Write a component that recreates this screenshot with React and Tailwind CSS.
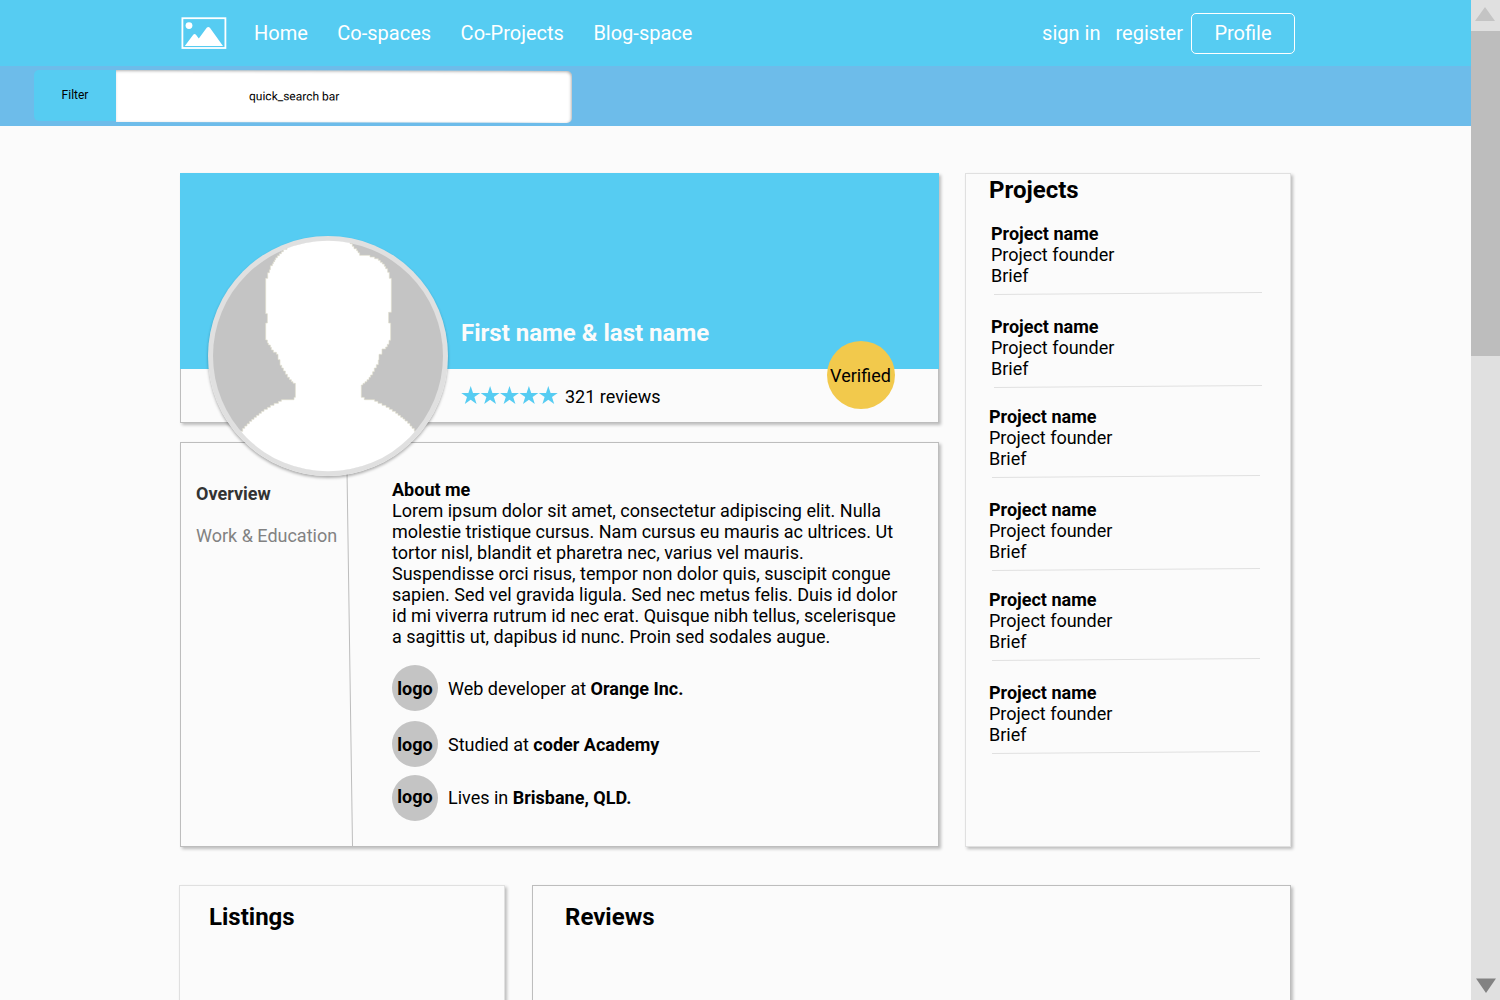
const projects = [
  { pad: 'pl-[25px]', gap: 'mt-[19px]' },
  { pad: 'pl-[25px]', gap: 'mt-[21px]' },
  { pad: 'pl-[23px]', gap: 'mt-[18px]' },
  { pad: 'pl-[23px]', gap: 'mt-[21px]' },
  { pad: 'pl-[23px]', gap: 'mt-[18px]' },
  { pad: 'pl-[23px]', gap: 'mt-[21px]' },
];

const facts = [
  { text: 'Web developer at ', strong: 'Orange Inc.', gap: 'mt-[18px]', logo: 'pt-px', label: 'pb-0' },
  { text: 'Studied at ', strong: 'coder Academy', gap: 'mt-[10px]', logo: 'pt-px', label: 'pb-0' },
  { text: 'Lives in ', strong: 'Brisbane, QLD.', gap: 'mt-[8px]', logo: 'pb-[3px]', label: 'pb-[2px]' },
];

function PictureIcon() {
  return (
    <svg className="h-[33px] w-[46px] shrink-0" viewBox="0 0 46 33" fill="none">
      <rect x="1.4" y="1.2" width="43" height="29.8" stroke="white" strokeWidth="1.8" />
      <circle cx="8" cy="8.6" r="3.4" fill="white" />
      <path d="M3.8 29 12.2 17.8Q13.6 16.2 15 17.8L17.8 21.4 25.7 10.8Q27.3 9 28.9 10.8L42 29Z" fill="white" />
    </svg>
  );
}

function Avatar() {
  return (
    <svg
      className="absolute top-[62px] left-[27px] z-10 h-[240px] w-[240px] overflow-visible rounded-full shadow-[0_2px_3px_rgba(0,0,0,0.3)]"
      viewBox="39 33 720 720"
    >
      <clipPath id="face">
        <circle cx="399" cy="393" r="346" />
      </clipPath>
      <circle cx="399" cy="393" r="360" fill="#e0e0e0" />
      <circle cx="399" cy="393" r="345" fill="#c4c4c4" />
      <path
        clipPath="url(#face)"
        fill="white"
        stroke="#dedccb"
        strokeWidth="2"
        d="M276 44V73H265V80H259V86H253V92H247V98H242V104H239V110H235V116H232V122H226V134H223V143H218V160H212V266H217V294H212V345H217V354H220V360H226V367H229V375H235V382H244V388H249V404H255V421H260V429H265V438H271V448H277V457H283V464H289V470H294V475H301V517H297V524H259V529H250V535H237V541H226V547H217V553H207V559H199V565H192V571H184V577H177V583H170V589H163V596H156V603H149V610H143V619H100V760H700V619H658V610H651V603H645V595H638V588H630V582H624V577H617V571H609V565H602V559H592V553H583V547H573V541H561V535H549V529H539V524H508V517H499V480H504V475H510V470H516V464H522V457H527V450H533V440H538V429H544V419H550V405H552V388H561V372H572V366H577V358H582V346H587V294H581V262H589V160H583V142H578V131H572V124H568V117H562V112H556V106H550V101H539V96H525V91H494V83H489V77H485V71H477V64H472V56H465V44Z"
      />
    </svg>
  );
}

function Stars() {
  return (
    <svg className="h-[20px] w-[97px] shrink-0" viewBox="0 0 97 20" fill="#56ccf2">
      {[0, 1, 2, 3, 4].map((i) => (
        <path
          key={i}
          transform={`translate(${i * 19.4} 0)`}
          d="M9.7 0 12 6.9H19.2L13.4 11.1 15.6 18 9.7 13.8 3.8 18 6 11.1.2 6.9H7.4Z"
        />
      ))}
    </svg>
  );
}

function Header() {
  return (
    <header className="flex h-[66px] items-center bg-[#56ccf2] pl-[181px] pr-[176px] text-[20px] leading-[23px] text-white">
      <PictureIcon />
      <nav className="ml-[27px] flex gap-[29.5px]">
        <a>Home</a>
        <a>Co-spaces</a>
        <a>Co-Projects</a>
        <a>Blog-space</a>
      </nav>
      <div className="ml-auto flex items-center">
        <a className="mr-[15px]">sign in</a>
        <a className="mr-[8px]">register</a>
        <button className="flex h-[41px] w-[104px] items-center justify-center rounded-[5px] border border-white">Profile</button>
      </div>
    </header>
  );
}

function SearchBar() {
  return (
    <div className="flex h-[60px] bg-[#6dbcea] pl-[34px] pt-[4px] text-[12px] leading-[14px] text-black">
      <div className="flex h-[51px] w-[82px] items-center justify-center rounded-l-[5px] bg-[#56ccf2] pb-px">Filter</div>
      <div className="flex h-[51.5px] w-[456px] origin-top-left skew-y-[0.12deg] items-center rounded-r-[5px] bg-white pl-[133px] pt-px shadow-[inset_-1px_1px_3px_rgba(0,0,0,0.3)]">
        quick_search bar
      </div>
    </div>
  );
}

function ProfileCard() {
  return (
    <section className="relative h-[250px] border border-[#bdbdbd] bg-[#fbfbfb] shadow-[2px_2px_3px_rgba(0,0,0,0.25)]">
      <div className="-mx-px -mt-px h-[196px] bg-[#56ccf2] pl-[281px] pt-[146px]">
        <h1 className="text-[24px] leading-[28px] font-bold text-[#fbfbfb]">First name &amp; last name</h1>
      </div>
      <div className="flex items-start pl-[280px] pt-[17px] text-[18px] leading-[21px]">
        <Stars />
        <span className="ml-[7px]">321 reviews</span>
      </div>
      <Avatar />
      <div className="absolute top-[167px] left-[646px] flex size-[68px] items-center justify-center rounded-full bg-[#f2c94c] pr-px text-[18px] leading-[21px]">
        Verified
      </div>
    </section>
  );
}

function OverviewCard() {
  return (
    <section className="mt-[19px] flex h-[405px] border border-[#bdbdbd] bg-[#fbfbfb] text-[18px] leading-[21px] shadow-[2px_2px_3px_rgba(0,0,0,0.25)]">
      <div className="w-[166px] shrink-0 pl-[15px] pt-[40px] whitespace-nowrap">
        <div className="font-bold text-[#333]">Overview</div>
        <div className="mt-[21px] text-[#828282]">Work &amp; Education</div>
      </div>
      <svg className="h-[403px] w-[7px] shrink-0 overflow-visible" viewBox="0 0 7 403">
        <path d="M-.4 0 5.5 403" stroke="#bdbdbd" strokeWidth="1" />
      </svg>
      <div className="pl-[38px] pt-[36px] whitespace-nowrap">
        <h2 className="font-bold">About me</h2>
        <p>
          Lorem ipsum dolor sit amet, consectetur adipiscing elit. Nulla<br />
          molestie tristique cursus. Nam cursus eu mauris ac ultrices. Ut<br />
          tortor nisl, blandit et pharetra nec, varius vel mauris.<br />
          Suspendisse orci risus, tempor non dolor quis, suscipit congue<br />
          sapien. Sed vel gravida ligula. Sed nec metus felis. Duis id dolor<br />
          id mi viverra rutrum id nec erat. Quisque nibh tellus, scelerisque<br />
          a sagittis ut, dapibus id nunc. Proin sed sodales augue.
        </p>
        {facts.map((f) => (
          <div key={f.text} className={`flex items-center ${f.gap}`}>
            <div className={`flex size-[46px] items-center justify-center rounded-full bg-[#c4c4c4] font-bold ${f.logo}`}>logo</div>
            <div className={`ml-[10px] ${f.label}`}>
              {f.text}
              <b>{f.strong}</b>
            </div>
          </div>
        ))}
      </div>
    </section>
  );
}

function ProjectsCard() {
  return (
    <aside className="ml-[26px] h-[674px] w-[326px] border border-[#e0e0e0] bg-[#fbfbfb] text-[18px] leading-[21px] shadow-[2px_2px_3px_rgba(0,0,0,0.25)]">
      <h2 className="pl-[23px] pt-[2px] text-[24px] leading-[28px] font-bold">Projects</h2>
      {projects.map((p, i) => (
        <div key={i} className={`${p.pad} ${p.gap}`}>
          <div className="font-bold">Project name</div>
          <div>Project founder</div>
          <div>Brief</div>
          <svg className="mt-[5px] ml-[3px] h-[4px] w-[268px]" viewBox="0 0 268 4">
            <path d="M0 3.5 268 1.5" stroke="#e0e0e0" strokeWidth="1" />
          </svg>
        </div>
      ))}
    </aside>
  );
}

function Scrollbar() {
  return (
    <div className="flex h-[1000px] w-[29px] flex-col bg-[#e0e0e0]">
      <div className="h-[31px]">
        <svg className="h-[31px] w-[29px]" viewBox="0 0 29 31">
          <path d="M14 7 24 21H4Z" fill="#c4c4c4" />
        </svg>
      </div>
      <div className="h-[325px] bg-[#bdbdbd]" />
      <svg className="mt-auto h-[24px] w-[29px]" viewBox="0 0 29 24">
        <path d="M5 2.5H25L15 17Z" fill="#828282" />
      </svg>
    </div>
  );
}

export default function App() {
  return (
    <div className="flex h-[1000px] w-[1500px] overflow-hidden bg-[#fbfbfb] font-['Roboto',sans-serif] text-black">
      <div className="h-[1000px] w-[1471px] overflow-hidden">
        <Header />
        <SearchBar />
        <main className="pt-[47px] pl-[180px]">
          <div className="flex">
            <div className="w-[759px]">
              <ProfileCard />
              <OverviewCard />
            </div>
            <ProjectsCard />
          </div>
          <div className="-ml-px mt-[38px] flex gap-[27px] text-[24px] leading-[28px] font-bold">
            <section className="h-[300px] w-[326px] border border-[#e0e0e0] pl-[29px] pt-[17px] shadow-[2px_2px_3px_rgba(0,0,0,0.25)]">
              <h2>Listings</h2>
            </section>
            <section className="h-[300px] w-[759px] border border-[#bdbdbd] pl-[32px] pt-[17px] shadow-[2px_2px_3px_rgba(0,0,0,0.25)]">
              <h2>Reviews</h2>
            </section>
          </div>
        </main>
      </div>
      <Scrollbar />
    </div>
  );
}
